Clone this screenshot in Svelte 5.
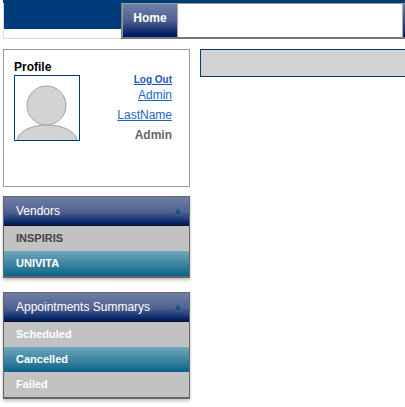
<script>
  const vendors = [
    { name: 'INSPIRIS', state: 'dark' },
    { name: 'UNIVITA', state: 'active' },
  ];

  const summaries = [
    { name: 'Scheduled', state: '' },
    { name: 'Cancelled', state: 'active' },
    { name: 'Failed', state: '' },
  ];

  const panels = [
    { title: 'Vendors', rows: vendors },
    { title: 'Appointments Summarys', rows: summaries },
  ];
</script>

<div class="page">
  <header class="header">
    <div class="brand"></div>
    <nav class="nav">
      <a class="tab" href="#home">Home</a>
      <div class="nav-fill"></div>
      <div class="tab-end"></div>
    </nav>
  </header>

  <div class="main">
    <aside class="sidebar">
      <section class="profile">
        <h3 class="profile-title">Profile</h3>
        <div class="profile-body">
          <div class="avatar">
            <svg width="64" height="64" viewBox="0 0 64 64">
              <ellipse cx="32" cy="65" rx="30" ry="16" fill="#d3d3d3" stroke="#a0a0a0" stroke-width="1" />
              <circle cx="31.5" cy="29.5" r="19.5" fill="#d3d3d3" stroke="#a0a0a0" stroke-width="1" />
            </svg>
          </div>
          <div class="profile-links">
            <a class="logout" href="#logout">Log Out</a>
            <a class="name first" href="#first">Admin</a>
            <a class="name last" href="#last">LastName</a>
            <span class="role">Admin</span>
          </div>
        </div>
      </section>

      {#each panels as panel (panel.title)}
        <section class="panel">
          <div class="panel-head">
            <span>{panel.title}</span>
            <span class="arrow"></span>
          </div>
          {#each panel.rows as row (row.name)}
            <div class="row {row.state}">{row.name}</div>
          {/each}
        </section>
      {/each}
    </aside>

    <div class="content">
      <div class="title-bar"></div>
    </div>
  </div>
</div>

<style>
  :global(body) {
    margin: 0;
    background: #fff;
    overflow: hidden;
  }

  .page {
    width: 405px;
    height: 407px;
    font-family: "Liberation Sans", Arial, sans-serif;
    overflow: hidden;
  }

  .header {
    display: flex;
    height: 39px;
    margin-left: 3px;
    padding-top: 3px;
    box-sizing: border-box;
    background: linear-gradient(#003b7a 3px, transparent 3px);
  }

  .brand {
    width: 118px;
    flex: none;
    box-sizing: border-box;
    border-left: 1px solid #d8d8d8;
    border-bottom: 1px solid #d8d8d8;
    background: linear-gradient(#003b7a 26px, #fff 26px);
  }

  .nav {
    display: flex;
    width: 290px;
    flex: none;
    box-sizing: border-box;
    border: 1px solid #777;
    border-top-color: #999;
    border-bottom-width: 2px;
  }

  .tab {
    width: 56px;
    padding-top: 4px;
    box-sizing: border-box;
    text-align: center;
    font-size: 12px;
    font-weight: bold;
    line-height: 20px;
    color: #fff;
    text-decoration: none;
    background: linear-gradient(#6f7fa6, #4f6190 50%, #001f63 92%);
    border-left: 1px solid #999;
    border-right: 1px solid #aaa;
  }

  .nav-fill {
    flex: 1;
    background: #fff;
  }

  .tab-end {
    width: 8px;
    box-sizing: border-box;
    border-left: 1px solid #aaa;
    background: linear-gradient(#6f7fa6, #001f63);
  }

  .main {
    display: flex;
    gap: 10px;
    margin: 10px 0 0 3px;
  }

  .sidebar {
    display: flex;
    flex-direction: column;
    width: 187px;
    flex: none;
  }

  .profile {
    height: 138px;
    box-sizing: border-box;
    padding: 10px 17px 0 10px;
    border: 1px solid #999;
    margin-bottom: 9px;
  }

  .profile-title {
    margin: 0;
    font-size: 12px;
    font-weight: bold;
    line-height: 15px;
    color: #000;
  }

  .profile-body {
    display: flex;
    justify-content: space-between;
  }

  .avatar {
    width: 66px;
    height: 66px;
    box-sizing: border-box;
    border: 1px solid #003b7a;
    overflow: hidden;
  }

  .avatar svg {
    display: block;
  }

  .profile-links {
    display: flex;
    flex-direction: column;
    align-items: flex-end;
  }

  .logout {
    margin-top: -1px;
    font-size: 10px;
    font-weight: bold;
    line-height: 12px;
    color: #1a56c4;
  }

  .name {
    font-size: 12px;
    line-height: 14px;
    color: #1a66c4;
  }

  .first {
    margin-top: 2px;
  }

  .last {
    margin-top: 6px;
  }

  .role {
    margin-top: 6px;
    font-size: 12px;
    font-weight: bold;
    line-height: 14px;
    color: #666;
  }

  .panel {
    width: 185px;
    margin-bottom: 14px;
    border: 1px solid #666;
    border-bottom-width: 2px;
    box-shadow: 0 2px 3px rgba(0, 0, 0, 0.25);
  }

  .panel-head {
    display: flex;
    align-items: center;
    justify-content: space-between;
    height: 29px;
    padding: 0 7px 0 12px;
    font-size: 12px;
    color: #fff;
    background: linear-gradient(#6f7fa6, #4f6190 55%, #001f63 95%);
    border-bottom: 1px solid #111;
    box-sizing: border-box;
  }

  .arrow {
    width: 0;
    height: 0;
    margin-right: 1px;
    border-left: 3.5px solid transparent;
    border-right: 3.5px solid transparent;
    border-bottom: 6px solid #0e5570;
  }

  .row {
    height: 25px;
    padding-left: 12px;
    font-size: 11px;
    font-weight: bold;
    line-height: 25px;
    color: #fff;
    background: #c2c2c2;
    box-sizing: border-box;
  }

  .row.dark {
    color: #444;
  }

  .row.active {
    color: #fff;
    background: linear-gradient(#72a6bb, #0b6488);
  }

  .content {
    flex: 1;
  }

  .title-bar {
    height: 28px;
    box-sizing: border-box;
    border: 1px solid #003b7a;
    border-right: none;
    background: #d3d3d3;
  }
</style>
